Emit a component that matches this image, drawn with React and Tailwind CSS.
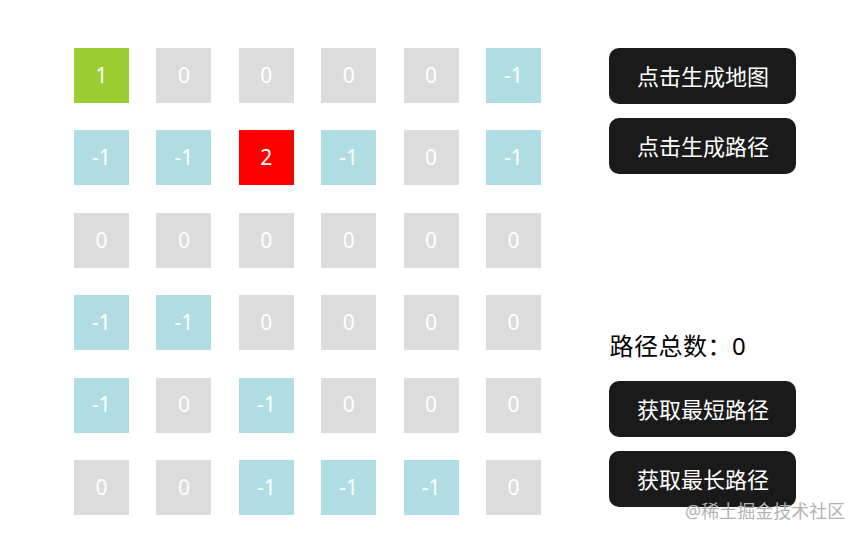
const grid = [
  [1, 0, 0, 0, 0, -1],
  [-1, -1, 2, -1, 0, -1],
  [0, 0, 0, 0, 0, 0],
  [-1, -1, 0, 0, 0, 0],
  [-1, 0, -1, 0, 0, 0],
  [0, 0, -1, -1, -1, 0],
];

function cellColor(v) {
  if (v === 1) return 'bg-[#9acd32]';
  if (v === 2) return 'bg-[#ff0000]';
  if (v === -1) return 'bg-[#b0dde4]';
  return 'bg-[#dcdcdc]';
}

function Btn({ children }) {
  return (
    <button className="w-[187px] h-[56px] rounded-[10px] bg-[#1a1a1a] text-white text-[22px] leading-none flex items-center justify-center">
      {children}
    </button>
  );
}

export default function App() {
  return (
    <div
      className="relative w-[862px] h-[542px] bg-white overflow-hidden"
      style={{ fontFamily: '"Noto Sans", "Noto Sans CJK SC", sans-serif' }}
    >
      <div className="flex pl-[74px] pt-[48px] gap-[68.5px]">
        {/* map */}
        <div className="grid grid-cols-[repeat(6,55px)] auto-rows-[55px] gap-[27.4px]">
          {grid.flat().map((v, i) => (
            <div
              key={i}
              className={`${cellColor(v)} flex items-center justify-center text-white text-[21px]`}
            >
              {v}
            </div>
          ))}
        </div>

        {/* controls */}
        <div className="flex flex-col justify-between h-[459px]">
          <div className="flex flex-col gap-[14px]">
            <Btn>点击生成地图</Btn>
            <Btn>点击生成路径</Btn>
          </div>
          <div className="flex flex-col gap-[14px]">
            <div className="text-[24px] leading-[36px] text-black mb-[3px] tracking-[0.5px]">路径总数：0</div>
            <Btn>获取最短路径</Btn>
            <Btn>获取最长路径</Btn>
          </div>
        </div>
      </div>

      <div className="absolute left-[685px] top-[500px] text-[18px] leading-[22px] text-[#b3b3b3] whitespace-nowrap">
        @稀土掘金技术社区
      </div>
    </div>
  );
}
